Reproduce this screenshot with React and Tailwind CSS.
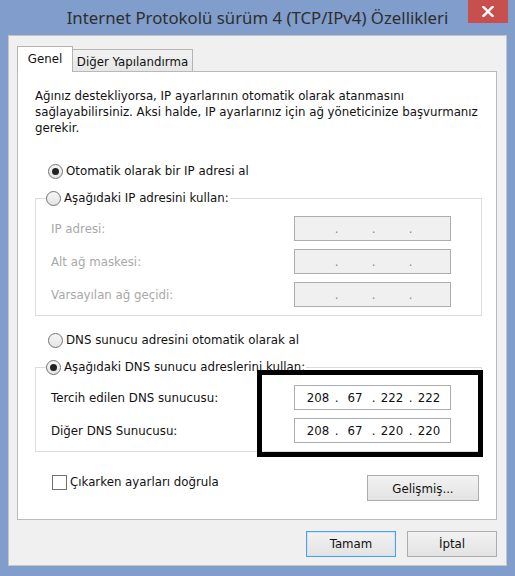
import React from "react";

function Radio({ checked }) {
  return (
    <span className="flex h-[15px] w-[15px] shrink-0 items-center justify-center rounded-full border border-[#737373] bg-gradient-to-b from-[#f6f6f6] to-[#e4e4e4]">
      {checked && <span className="h-[7px] w-[7px] rounded-full bg-[#222]" />}
    </span>
  );
}

function RadioRow({ checked, children, className = "" }) {
  return (
    <div className={"flex h-[16px] items-center gap-[3px] " + className}>
      <Radio checked={checked} />
      <span>{children}</span>
    </div>
  );
}

function IpBox({ values }) {
  const enabled = !!values;
  const oct = values || ["", "", "", ""];
  return (
    <div
      className={
        "flex h-[25px] w-[157px] items-center border pl-[8px] " +
        (enabled ? "border-[#abadb3] bg-white text-[#111]" : "border-[#adadad] bg-[#f0f0f0] text-[#8a8a8a]")
      }
    >
      {oct.map((v, i) => (
        <React.Fragment key={i}>
          <span className="w-[30px] text-center">{v}</span>
          {i < 3 && <span className="w-[7px] text-center">.</span>}
        </React.Fragment>
      ))}
    </div>
  );
}

function Row({ label, values, disabled }) {
  return (
    <div className="flex h-[33px] items-center justify-between pr-[30px]">
      <span className={"ml-[4px] " + (disabled ? "text-[#a8a8a8]" : "")}>{label}</span>
      <IpBox values={values} />
    </div>
  );
}

export default function App() {
  return (
    <div className="relative h-[576px] w-[515px] overflow-hidden bg-[#809dcb] font-['DejaVu_Sans',sans-serif] text-[11.8px] leading-[16px] text-[#111]">
      {/* title bar */}
      <div className="flex h-[35px] items-start">
        <div className="flex-1 pl-[47px] pt-[6px] text-center font-['Noto_Sans',sans-serif] text-[16.8px] leading-[24px] text-[#2e2e2e]">
          Internet Protokolü sürüm 4 (TCP/IPv4) Özellikleri
        </div>
        <div className="mr-[7px] flex h-[23px] w-[40px] items-center justify-center bg-[#c7504f]">
          <svg width="12" height="11" viewBox="0 0 12 11">
            <path d="M1.5 1 L10.5 10 M10.5 1 L1.5 10" stroke="white" strokeWidth="2.4" strokeLinecap="square" />
          </svg>
        </div>
      </div>

      {/* window body */}
      <div className="ml-[8px] flex h-[531px] w-[499px] flex-col border border-[#c5c5c5] bg-[#f0f0f0] pl-[8px] pr-[9px] pt-[9px]">
        {/* tabs */}
        <div className="flex h-[26px] items-end">
          <div className="relative z-10 -mb-px flex h-[26px] w-[56px] items-center justify-center border border-b-0 border-[#b4b4b4] bg-white pb-[1px]">
            Genel
          </div>
          <div className="flex h-[22px] w-[120px] items-center justify-center border border-l-0 border-b-0 border-[#b4b4b4] bg-gradient-to-b from-[#f2f2f2] to-[#e6e6e6] pt-[2px]">
            Diğer Yapılandırma
          </div>
        </div>

        {/* panel */}
        <div className="flex h-[449px] flex-col border border-[#b9b9b9] bg-white pl-[17px] pr-[14px]">
          <p className="mt-[16px] whitespace-nowrap">
            Ağınız destekliyorsa, IP ayarlarının otomatik olarak atanmasını
            <br />
            sağlayabilirsiniz. Aksi halde, IP ayarlarınız için ağ yöneticinize başvurmanız
            <br />
            gerekir.
          </p>

          <RadioRow checked className="ml-[13px] mt-[27px]">Otomatik olarak bir IP adresi al</RadioRow>

          <fieldset className="mt-[11px] w-[447px] border border-[#dcdcdc] pb-[4px] pl-[11px]">
            <legend className="h-[16px]">
              <RadioRow className="-ml-[1px] pr-[1px]">Aşağıdaki IP adresini kullan:</RadioRow>
            </legend>
            <div className="pt-[6px]">
              <Row label="IP adresi:" disabled />
              <Row label="Alt ağ maskesi:" disabled />
              <Row label="Varsayılan ağ geçidi:" disabled />
            </div>
          </fieldset>

          <RadioRow className="ml-[13px] mt-[16px]">DNS sunucu adresini otomatik olarak al</RadioRow>

          <fieldset className="mt-[11px] w-[447px] border border-[#dcdcdc] pb-[4px] pl-[11px]">
            <legend className="h-[16px]">
              <RadioRow checked className="-ml-[1px] pr-[1px]">Aşağıdaki DNS sunucu adreslerini kullan:</RadioRow>
            </legend>
            <div className="pt-[6px]">
              <Row label="Tercih edilen DNS sunucusu:" values={["208", "67", "222", "222"]} />
              <Row label="Diğer DNS Sunucusu:" values={["208", "67", "220", "220"]} />
            </div>
          </fieldset>

          <div className="mt-[22px] flex items-start justify-between pr-[3px]">
            <div className="ml-[17px] flex h-[16px] items-center gap-[3px]">
              <span className="h-[15px] w-[15px] border border-[#707070] bg-white" />
              <span>Çıkarken ayarları doğrula</span>
            </div>
            <button className="mt-[1px] h-[26px] w-[112px] border border-[#acacac] bg-gradient-to-b from-[#f2f2f2] to-[#e3e3e3] pt-[1px] text-[#111]">
              Gelişmiş...
            </button>
          </div>
        </div>

        {/* footer buttons */}
        <div className="mt-[11px] flex justify-end gap-[11px]">
          <button className="h-[26px] w-[90px] border border-[#569de5] bg-gradient-to-b from-[#f2f2f2] to-[#e3e3e3] text-[#111] shadow-[inset_0_0_0_1px_#cde4f7]">
            Tamam
          </button>
          <button className="h-[26px] w-[90px] border border-[#acacac] bg-gradient-to-b from-[#f2f2f2] to-[#e3e3e3] text-[#111]">
            İptal
          </button>
        </div>
      </div>

      {/* annotation rectangle */}
      <div className="pointer-events-none absolute left-[257px] top-[370px] h-[87px] w-[226px] border-[5px] border-black" />
    </div>
  );
}
